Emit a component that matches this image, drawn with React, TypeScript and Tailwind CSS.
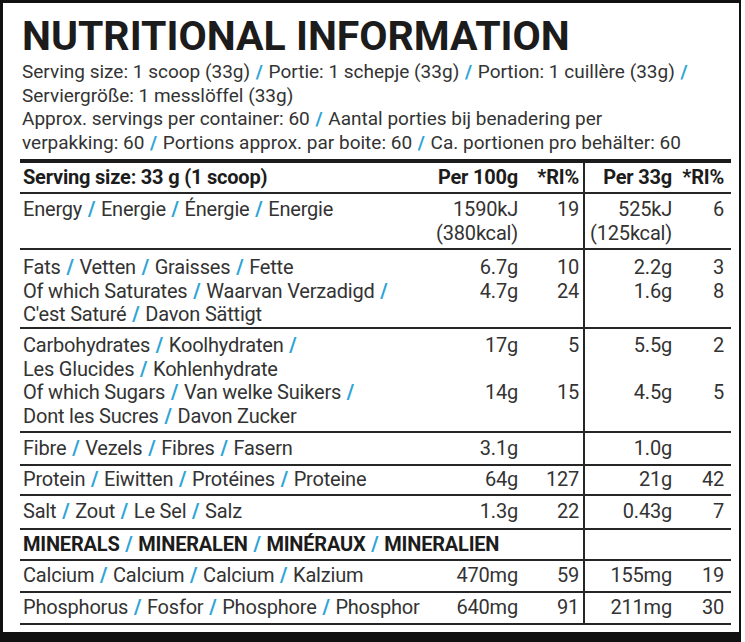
import React from "react"

type Line = React.ReactNode

const Slash = () => <span className="mx-[1px] font-bold text-[#2ea5d6]"> / </span>

// joins label parts with the cyan slash, trailing slash if asked
const Label = ({ parts, trail }: { parts: string[]; trail?: boolean }) => (
  <>
    {parts.map((p, i) => (
      <React.Fragment key={i}>
        {i > 0 && <Slash />}
        {p}
      </React.Fragment>
    ))}
    {trail && <Slash />}
  </>
)

type Row = {
  h: string
  pt: string
  label: Line[]
  per100?: string[]
  ri100?: string[]
  per33?: string[]
  ri33?: string[]
}

const rows: Row[] = [
  {
    h: "h-[56px]",
    pt: "pt-[4px]",
    label: [<Label parts={["Energy", "Energie", "Énergie", "Energie"]} />],
    per100: ["1590kJ", "(380kcal)"],
    ri100: ["19"],
    per33: ["525kJ", "(125kcal)"],
    ri33: ["6"],
  },
  {
    h: "h-[79px]",
    pt: "pt-[6px]",
    label: [
      <Label parts={["Fats", "Vetten", "Graisses", "Fette"]} />,
      <Label parts={["Of which Saturates", "Waarvan Verzadigd"]} trail />,
      <Label parts={["C'est Saturé", "Davon Sättigt"]} />,
    ],
    per100: ["6.7g", "4.7g"],
    ri100: ["10", "24"],
    per33: ["2.2g", "1.6g"],
    ri33: ["3", "8"],
  },
  {
    h: "h-[104px]",
    pt: "pt-[5px]",
    label: [
      <Label parts={["Carbohydrates", "Koolhydraten"]} trail />,
      <Label parts={["Les Glucides", "Kohlenhydrate"]} />,
      <Label parts={["Of which Sugars", "Van welke Suikers"]} trail />,
      <Label parts={["Dont les Sucres", "Davon Zucker"]} />,
    ],
    per100: ["17g", "", "14g"],
    ri100: ["5", "", "15"],
    per33: ["5.5g", "", "4.5g"],
    ri33: ["2", "", "5"],
  },
  {
    h: "h-[33px]",
    pt: "pt-[4px]",
    label: [<Label parts={["Fibre", "Vezels", "Fibres", "Fasern"]} />],
    per100: ["3.1g"],
    per33: ["1.0g"],
  },
  {
    h: "h-[30px]",
    pt: "pt-[2px]",
    label: [<Label parts={["Protein", "Eiwitten", "Protéines", "Proteine"]} />],
    per100: ["64g"],
    ri100: ["127"],
    per33: ["21g"],
    ri33: ["42"],
  },
  {
    h: "h-[34px]",
    pt: "pt-[4px]",
    label: [<Label parts={["Salt", "Zout", "Le Sel", "Salz"]} />],
    per100: ["1.3g"],
    ri100: ["22"],
    per33: ["0.43g"],
    ri33: ["7"],
  },
]

const minerals: Row[] = [
  {
    h: "h-[32px]",
    pt: "pt-[3px]",
    label: [<Label parts={["Calcium", "Calcium", "Calcium", "Kalzium"]} />],
    per100: ["470mg"],
    ri100: ["59"],
    per33: ["155mg"],
    ri33: ["19"],
  },
  {
    h: "h-[32px]",
    pt: "pt-[3px]",
    label: [<Label parts={["Phosphorus", "Fosfor", "Phosphore", "Phosphor"]} />],
    per100: ["640mg"],
    ri100: ["91"],
    per33: ["211mg"],
    ri33: ["30"],
  },
]

const Cell = ({ lines, className }: { lines?: Line[]; className: string }) => (
  <div className={className}>
    {(lines || []).map((l, i) => (
      <div key={i} className="h-[23.5px] whitespace-nowrap">
        {l}
      </div>
    ))}
  </div>
)

const grid = "grid grid-cols-[400px_98px_65px_89px_59px] border-b-2 border-[#262626]"

const TableRow = ({ row }: { row: Row }) => (
  <div className={`${grid} ${row.h}`}>
    <Cell lines={row.label} className={`pl-[3px] ${row.pt}`} />
    <Cell lines={row.per100} className={`text-right ${row.pt}`} />
    <Cell lines={row.ri100} className={`text-right pr-[4px] ${row.pt}`} />
    <Cell lines={row.per33} className={`text-right border-l-2 border-[#262626] ${row.pt}`} />
    <Cell lines={row.ri33} className={`text-right pr-[7px] ${row.pt}`} />
  </div>
)

export default function App() {
  return (
    <div className="w-[745px] h-[642px] bg-white" style={{ fontFamily: "Roboto, 'Liberation Sans', sans-serif" }}>
      <div className="w-[741px] h-[642px] border-l-[3px] border-t-[3px] border-r-2 border-b-[10px] border-[#111] pt-[13px] text-[#333]">
        <h1 className="pl-[19px] text-[41px] leading-[41px] font-bold text-[#1c1c1c]">
          NUTRITIONAL INFORMATION
        </h1>

        <div className="mt-[3px] pl-[19px] text-[19px] leading-[23.5px]">
          <div>
            <Label parts={["Serving size: 1 scoop (33g)", "Portie: 1 schepje (33g)", "Portion: 1 cuillère (33g)"]} trail />
          </div>
          <div>Serviergröße: 1 messlöffel (33g)</div>
          <div>
            <Label parts={["Approx. servings per container: 60", "Aantal porties bij benadering per"]} />
          </div>
          <div>
            <Label parts={["verpakking: 60", "Portions approx. par boite: 60", "Ca. portionen pro behälter: 60"]} />
          </div>
        </div>

        {/* tabel */}
        <div className="mt-[5px] ml-[17px] w-[711px] border-t-4 border-[#1c1c1c] text-[20px] leading-[23.5px] tracking-[-0.01em]">
          <div className={`${grid} h-[31px] font-bold text-[#1c1c1c]`}>
            <div className="pl-[3px] pt-[3px] whitespace-nowrap">Serving size: 33 g (1 scoop)</div>
            <div className="text-right pt-[3px] whitespace-nowrap">Per 100g</div>
            <div className="text-right pr-[4px] pt-[3px]">*RI%</div>
            <div className="text-right pt-[3px] border-l-2 border-[#262626] whitespace-nowrap">Per 33g</div>
            <div className="text-right pr-[7px] pt-[3px]">*RI%</div>
          </div>

          {rows.map((r, i) => (
            <TableRow key={i} row={r} />
          ))}

          <div className={`${grid} h-[31px] font-bold text-[#1c1c1c]`}>
            <div className="col-span-3 pl-[3px] pt-[3px] whitespace-nowrap">
              <Label parts={["MINERALS", "MINERALEN", "MINÉRAUX", "MINERALIEN"]} />
            </div>
            <div className="border-l-2 border-[#262626]"></div>
            <div></div>
          </div>

          {minerals.map((r, i) => (
            <TableRow key={i} row={r} />
          ))}
        </div>
      </div>
    </div>
  )
}
